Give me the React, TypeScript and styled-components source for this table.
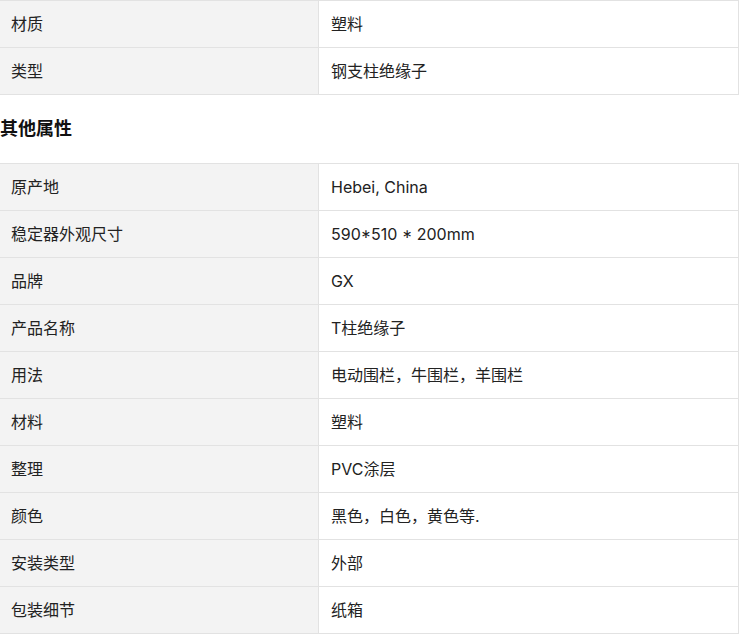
import React from "react";
import styled, { createGlobalStyle } from "styled-components";

const Global = createGlobalStyle`
  html, body { margin: 0; padding: 0; background: #fff; }
  body { font-family: Inter, "Noto Sans CJK SC", sans-serif; color: #222; }
`;

const Page = styled.div`
  margin: 0 0 0 -1px;
  width: 740px;
`;

const Table = styled.table`
  width: 740px;
  border-collapse: collapse;
  table-layout: fixed;
  font-size: 16px;
`;

const Row = styled.tr`
  height: 47px;
`;

const Cell = styled.td<{ $label?: boolean }>`
  border: 1px solid #e2e2e2;
  padding: 0 0 0 ${(p) => (p.$label ? "11px" : "12px")};
  box-sizing: border-box;
  background: ${(p) => (p.$label ? "#f3f3f3" : "#fff")};
  width: ${(p) => (p.$label ? "319px" : "auto")};
  color: #222;
  line-height: 22px;
  vertical-align: middle;
`;

const Heading = styled.h3`
  margin: 0;
  padding: 22px 0 22px 1px;
  font-size: 18px;
  line-height: 24px;
  font-weight: 700;
  color: #111;
`;

type Item = [string, string];

const top: Item[] = [
  ["材质", "塑料"],
  ["类型", "钢支柱绝缘子"],
];

const other: Item[] = [
  ["原产地", "Hebei, China"],
  ["稳定器外观尺寸", "590*510 * 200mm"],
  ["品牌", "GX"],
  ["产品名称", "T柱绝缘子"],
  ["用法", "电动围栏，牛围栏，羊围栏"],
  ["材料", "塑料"],
  ["整理", "PVC涂层"],
  ["颜色", "黑色，白色，黄色等."],
  ["安装类型", "外部"],
  ["包装细节", "纸箱"],
];

const AttrTable = ({ items }: { items: Item[] }) => (
  <Table>
    <tbody>
      {items.map(([k, v]) => (
        <Row key={k}>
          <Cell $label>{k}</Cell>
          <Cell>{v}</Cell>
        </Row>
      ))}
    </tbody>
  </Table>
);

export default function App() {
  return (
    <>
      <Global />
      <Page>
        <AttrTable items={top} />
        <Heading>其他属性</Heading>
        <AttrTable items={other} />
      </Page>
    </>
  );
}
